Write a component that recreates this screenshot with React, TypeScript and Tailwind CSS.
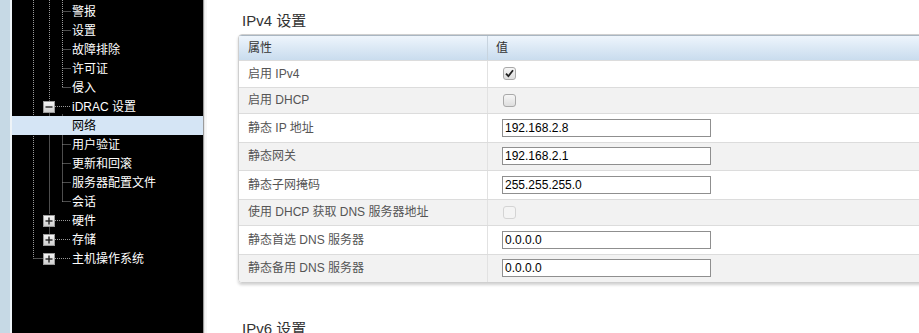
import React from "react";

const FONT = { fontFamily: '"Liberation Sans", "Noto Sans CJK SC", sans-serif' };

type TreeRow = { label: string; box?: "minus" | "plus"; selected?: boolean; level: 1 | 2 };

const tree: TreeRow[] = [
  { label: "警报", level: 2 },
  { label: "设置", level: 2 },
  { label: "故障排除", level: 2 },
  { label: "许可证", level: 2 },
  { label: "侵入", level: 2 },
  { label: "iDRAC 设置", level: 1, box: "minus" },
  { label: "网络", level: 2, selected: true },
  { label: "用户验证", level: 2 },
  { label: "更新和回滚", level: 2 },
  { label: "服务器配置文件", level: 2 },
  { label: "会话", level: 2 },
  { label: "硬件", level: 1, box: "plus" },
  { label: "存储", level: 1, box: "plus" },
  { label: "主机操作系统", level: 1, box: "plus" },
];

function TreeBox({ kind }: { kind: "minus" | "plus" }) {
  return (
    <div className="absolute left-[31px] top-[4px] flex h-[12px] w-[12px] items-center justify-center border border-[#9a9a9a] bg-gradient-to-b from-[#f4f4f4] to-[#cfcfcf]">
      <svg width="8" height="8" viewBox="0 0 8 8">
        <path d="M0.5 4 H7.5" stroke="#222" strokeWidth="1.4" />
        {kind === "plus" && <path d="M4 0.5 V7.5" stroke="#222" strokeWidth="1.4" />}
      </svg>
    </div>
  );
}

function TreeLines() {
  const c = "#9a9a9a";
  const dash = "1 1";
  const rc = (i: number) => 11.5 + 19 * i - 2; // row center in panel coords (panel starts at y=2 offset handled)
  const lines: React.ReactNode[] = [];
  // x coordinates relative to panel (page x - 12)
  const x0 = 21.5, x1 = 37.5, x2 = 50.5;
  lines.push(<path key="v0" d={`M${x0} 0 V${rc(13) + 2}`} />);
  lines.push(<path key="h0" d={`M${x0} ${rc(13) + 2} H31`} />);
  lines.push(<path key="v1a" d={`M${x1} 0 V${rc(5) - 4}`} />);
  lines.push(<path key="v1b" d={`M${x1} ${rc(5) + 8} V${rc(11) - 4}`} />);
  lines.push(<path key="v1c" d={`M${x1} ${rc(11) + 8} V${rc(12) - 4}`} />);
  [5, 11, 12, 13].forEach((i) => lines.push(<path key={`hb${i}`} d={`M43 ${rc(i) + 2} H58`} />));
  lines.push(<path key="v2a" d={`M${x2} 0 V${rc(4) + 2}`} />);
  lines.push(<path key="v2b" d={`M${x2} ${rc(5) + 10} V${rc(10) + 2}`} />);
  [0, 1, 2, 3, 4, 6, 7, 8, 9, 10].forEach((i) =>
    lines.push(<path key={`hc${i}`} d={`M${x2} ${rc(i) + 2} H59`} />)
  );
  return (
    <svg className="pointer-events-none absolute left-0 top-0" width="191" height="333">
      <g stroke={c} strokeWidth="1" strokeDasharray={dash} fill="none">
        {lines}
      </g>
    </svg>
  );
}

type Row =
  | { label: string; kind: "check"; checked?: boolean; disabled?: boolean }
  | { label: string; kind: "input"; value: string };

const rows: Row[] = [
  { label: "启用 IPv4", kind: "check", checked: true },
  { label: "启用 DHCP", kind: "check" },
  { label: "静态 IP 地址", kind: "input", value: "192.168.2.8" },
  { label: "静态网关", kind: "input", value: "192.168.2.1" },
  { label: "静态子网掩码", kind: "input", value: "255.255.255.0" },
  { label: "使用 DHCP 获取 DNS 服务器地址", kind: "check", disabled: true },
  { label: "静态首选 DNS 服务器", kind: "input", value: "0.0.0.0" },
  { label: "静态备用 DNS 服务器", kind: "input", value: "0.0.0.0" },
];

function CheckBox({ checked, disabled }: { checked?: boolean; disabled?: boolean }) {
  return (
    <div
      className={`flex h-[13px] w-[13px] items-center justify-center rounded-[3px] border ${
        disabled ? "border-[#d4d4d4] bg-[#f4f4f4]" : "border-[#a9a9a9] bg-gradient-to-b from-[#f6f6f6] to-[#dedede]"
      }`}
    >
      {checked && (
        <svg width="9" height="9" viewBox="0 0 9 9">
          <path d="M1 4.6 L3.4 7.2 L8 1.2" stroke="#222" strokeWidth="1.8" fill="none" />
        </svg>
      )}
    </div>
  );
}

export default function App() {
  return (
    <div className="flex h-[333px] w-[919px] overflow-hidden bg-white" style={FONT}>
      {/* left strip */}
      <div className="flex h-full w-[12px] shrink-0">
        <div className="h-full w-[10px] bg-[#c6d9e5]" />
        <div className="h-full w-[2px] bg-[#eef4f8]" />
      </div>
      {/* tree panel */}
      <div className="relative h-full w-[191px] shrink-0 bg-black pt-[2px]">
        <TreeLines />
        {tree.map((r, i) => (
          <div
            key={i}
            className={`relative flex h-[19px] items-center pl-[60px] text-[12px] leading-none ${
              r.selected ? "bg-[#d5e5f5] text-black" : "text-white"
            }`}
          >
            {r.box && <TreeBox kind={r.box} />}
            <span className="relative">{r.label}</span>
          </div>
        ))}
      </div>
      {/* divider */}
      <div className="flex h-full w-[4px] shrink-0">
        <div className="w-[1px] bg-[#9b9b9b]" />
        <div className="w-[1px] bg-[#e6e6e6]" />
        <div className="w-[2px] bg-[#f6f6f6]" />
      </div>
      {/* main */}
      <div className="h-full min-w-0 flex-1 overflow-hidden pl-[31px]">
        <div className="flex h-[34px] items-end pb-[6px] pl-[4px] text-[15px] leading-none text-[#333]">IPv4 设置</div>
        <div className="w-[760px] overflow-hidden rounded-[4px] border border-[#cfcfcf] shadow-[0_2px_3px_rgba(0,0,0,0.18)]">
          <div className="flex h-[25px] border-t border-[#a9b6c2] bg-gradient-to-b from-[#eef5fc] to-[#c9dcee] text-[12px] text-[#333]">
            <div className="flex w-[249px] items-center border-r border-[#c8d4df] pl-[9px]">属性</div>
            <div className="flex items-center pl-[8px]">值</div>
          </div>
          {rows.map((r, i) => (
            <div
              key={i}
              className={`flex border-t border-[#dcdcdc] text-[12px] text-[#555] ${
                r.kind === "input" ? "h-[28.5px]" : "h-[26.5px]"
              } ${i % 2 === 1 ? "bg-[#f2f2f2]" : "bg-white"}`}
            >
              <div className="flex w-[249px] items-center border-r border-[#e2e2e2] pl-[9px]">{r.label}</div>
              <div className="flex items-center pl-[14px]">
                {r.kind === "check" ? (
                  <div className="pl-[1px]">
                    <CheckBox checked={r.checked} disabled={r.disabled} />
                  </div>
                ) : (
                  <div className="flex h-[18px] w-[209px] items-center border border-[#8f8f8f] bg-white pl-[2px] text-[12px] text-black">
                    {r.value}
                  </div>
                )}
              </div>
            </div>
          ))}
        </div>
        <div className="pl-[4px] pt-[38px] text-[15px] leading-none text-[#333]">IPv6 设置</div>
      </div>
    </div>
  );
}
